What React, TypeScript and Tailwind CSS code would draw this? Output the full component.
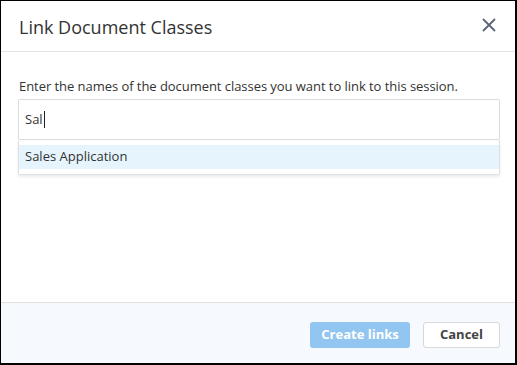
import React from "react";

export default function App() {
  return (
    <div
      className="w-[517px] h-[365px] bg-white border-l border-t border-r-2 border-b-2 border-black flex flex-col text-[#333]"
      style={{ fontFamily: '"Open Sans", sans-serif' }}
    >
      <div className="h-[51px] shrink-0 flex items-center justify-between pl-[18px] pr-[19px] border-b border-[#e5e5e5]">
        <div className="text-[18px] leading-none text-[#333] pt-[1px]">Link Document Classes</div>
        <svg width="14" height="14" viewBox="0 0 14 14" className="mt-[-2px]">
          <path d="M1.5 1.5 L12.5 12.5 M12.5 1.5 L1.5 12.5" stroke="#5b6477" strokeWidth="1.8" strokeLinecap="round" />
        </svg>
      </div>
      <div className="flex-1 px-[17px] pt-[25px]">
        <div className="text-[13px] leading-[18px] pl-[1px] text-[#333] tracking-[-0.05px]">
          Enter the names of the document classes you want to link to this session.
        </div>
        <div className="mt-[4px] w-[482px] h-[41px] border border-[#dcdcdc] rounded-[2px] flex items-center px-[6px]">
          <span className="text-[13px]">Sal</span>
          <span className="w-px h-[17px] bg-[#222] ml-[1px]"></span>
        </div>
        <div className="w-[482px] bg-white border border-[#e0e0e0] border-t-0 rounded-b-[2px] shadow-[0_2px_3px_rgba(0,0,0,0.08)] pt-[5px] pb-[5px]">
          <div className="h-[24px] bg-[#e6f5fd] flex items-center px-[6px] text-[13px]">Sales Application</div>
        </div>
      </div>
      <div className="h-[61px] shrink-0 bg-[#f6f9fe] border-t border-[#e0e0e0] flex items-center justify-end gap-[13px] pr-[15px] pt-[4px]">
        <div className="w-[100px] h-[26px] rounded-[3px] bg-[#92c6f0] text-white text-[13px] font-bold flex items-center justify-center">
          Create links
        </div>
        <div className="w-[77px] h-[26px] rounded-[3px] bg-white border border-[#d8d8d8] text-[#444] text-[13px] font-bold flex items-center justify-center">
          Cancel
        </div>
      </div>
    </div>
  );
}
